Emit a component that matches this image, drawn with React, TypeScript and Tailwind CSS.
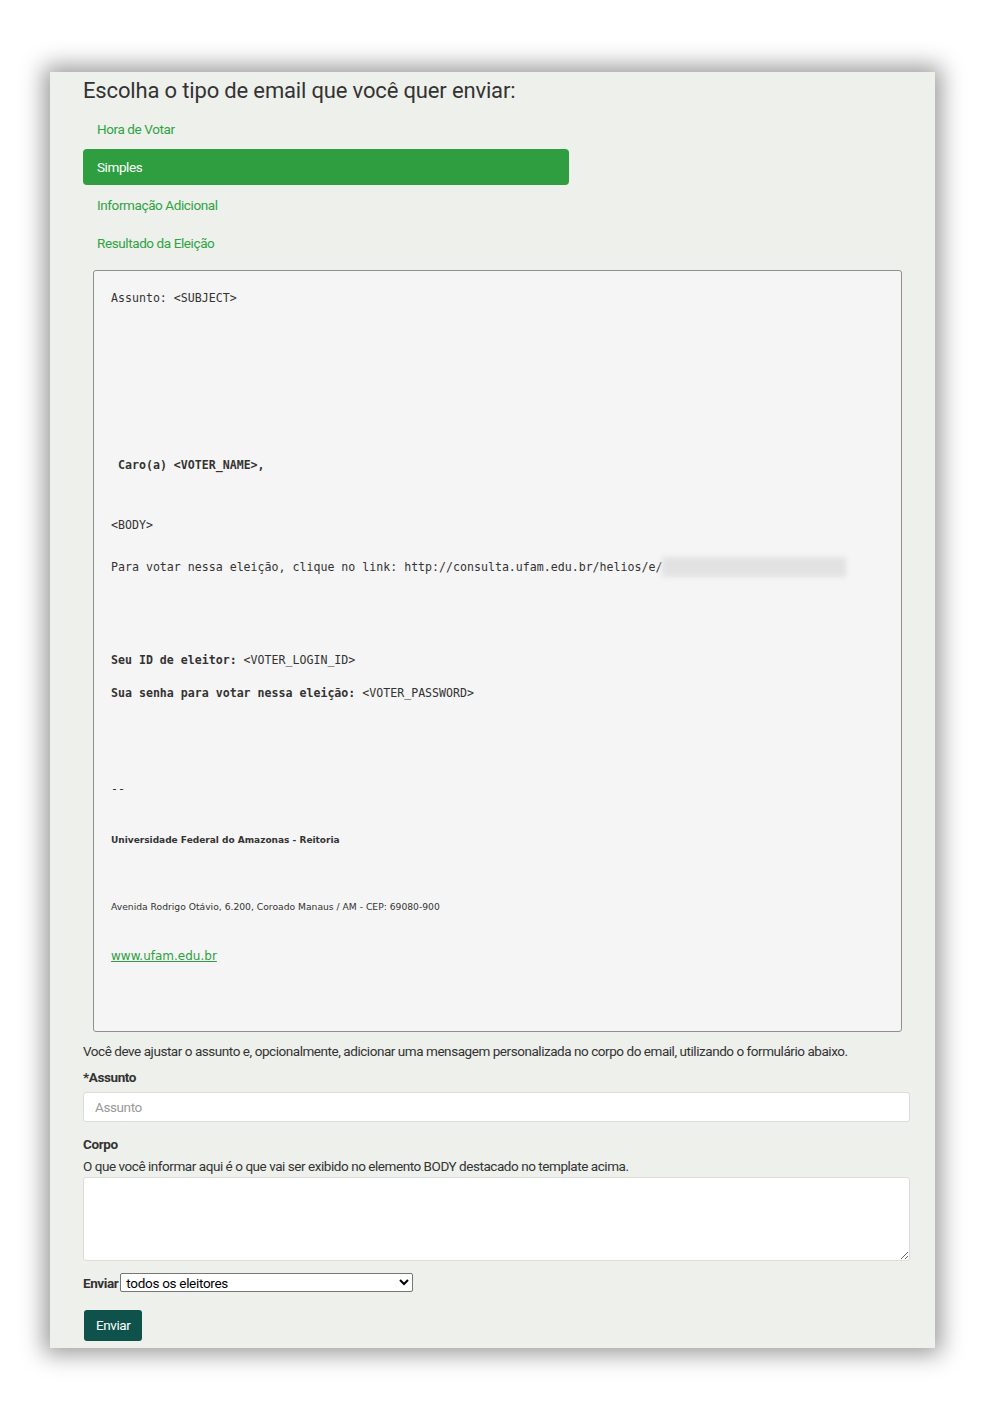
import React from "react";

const tipos = ["Hora de Votar", "Simples", "Informação Adicional", "Resultado da Eleição"];

export default function App() {
  return (
    <div className="min-h-[1420px] bg-white pt-[72px] pl-[50px] font-['Roboto',sans-serif] text-[#333]">
      <div className="w-[885px] h-[1276px] bg-[#eef0ec] shadow-[0_0_22px_6px_rgba(0,0,0,0.4)] pl-[33px] pr-[25px] pt-[6px]">
        <h2 className="text-[22px] leading-[26px] tracking-[-0.16px] text-[#333]">Escolha o tipo de email que você quer enviar:</h2>

        <ul className="mt-[7px] w-[486px] flex flex-col gap-[2px]">
          {tipos.map((t) => (
            <li key={t}>
              <a
                href="#"
                className={
                  t === "Simples"
                    ? "block h-[36px] leading-[36px] pl-[14px] rounded-[4px] bg-[#2e9e41] text-white text-[13.5px] tracking-[-0.4px]"
                    : "block h-[36px] leading-[36px] pl-[14px] text-[#2ea344] text-[13.5px] tracking-[-0.4px]"
                }
              >
                {t}
              </a>
            </li>
          ))}
        </ul>

        <div className="mt-[9px] ml-[10px] w-[809px] border border-[#8f8f8f] rounded-[3px] bg-[#f5f5f5] px-[17px] pt-[19px] pb-[67px] font-['DejaVu_Sans_Mono',monospace] text-[11.6px] text-[#333]">
          <div className="h-[16px] leading-[16px]">Assunto: &lt;SUBJECT&gt;</div>
          <div className="mt-[151px] h-[16px] leading-[16px] font-bold pl-[7px]">Caro(a) &lt;VOTER_NAME&gt;,</div>
          <div className="mt-[44px] h-[16px] leading-[16px]">&lt;BODY&gt;</div>
          <div className="mt-[26px] h-[16px] leading-[16px] flex items-center whitespace-pre">
            <span>Para votar nessa eleição, clique no link: http://consulta.ufam.edu.br/helios/e/</span>
            <span className="inline-block w-[184px] h-[20px] bg-[#e2e2e2] blur-[2.5px]"></span>
          </div>
          <div className="mt-[77px] h-[16px] leading-[16px]">
            <b>Seu ID de eleitor:</b> &lt;VOTER_LOGIN_ID&gt;
          </div>
          <div className="mt-[17px] h-[16px] leading-[16px]">
            <b>Sua senha para votar nessa eleição:</b> &lt;VOTER_PASSWORD&gt;
          </div>
          <div className="mt-[80px] h-[16px] leading-[16px]">--</div>
          <div className="mt-[35px] h-[16px] leading-[16px] font-['DejaVu_Sans',sans-serif] text-[9px] font-bold">
            Universidade Federal do Amazonas - Reitoria
          </div>
          <div className="mt-[51px] h-[16px] leading-[16px] font-['DejaVu_Sans',sans-serif] text-[9.2px]">
            Avenida Rodrigo Otávio, 6.200, Coroado Manaus / AM - CEP: 69080-900
          </div>
          <div className="mt-[33px] h-[16px] leading-[16px] font-['DejaVu_Sans',sans-serif] text-[12px]">
            <a href="#" className="text-[#2e9e41] underline">www.ufam.edu.br</a>
          </div>
        </div>

        <p className="mt-[9px] text-[13.5px] leading-[20px] tracking-[-0.45px]">
          Você deve ajustar o assunto e, opcionalmente, adicionar uma mensagem personalizada no corpo do email, utilizando o formulário abaixo.
        </p>
        <label className="block mt-[6px] text-[13.5px] leading-[20px] font-bold tracking-[-0.4px]">*Assunto</label>
        <input
          placeholder="Assunto"
          className="mt-[5px] block w-[827px] h-[30px] px-[11px] bg-white border border-[#dcdcdc] rounded-[3px] text-[13.5px] tracking-[-0.4px] placeholder:text-[#999]"
        />
        <label className="block mt-[12px] text-[13.5px] leading-[20px] font-bold tracking-[-0.4px]">Corpo</label>
        <p className="mt-[2px] text-[13.5px] leading-[20px] tracking-[-0.45px]">
          O que você informar aqui é o que vai ser exibido no elemento BODY destacado no template acima.
        </p>
        <textarea className="mt-[1px] block w-[827px] h-[84px] bg-white border border-[#dcdcdc] rounded-[3px]"></textarea>

        <div className="mt-[12px] h-[19px] flex items-center gap-[2px]">
          <span className="text-[13.5px] leading-[18px] font-bold tracking-[-0.4px]">Enviar</span>
          <select className="w-[293px] h-[19px] bg-white border border-[#767676] rounded-[2px] text-[13.5px] leading-[16px] tracking-[-0.3px] pl-[1px] text-black">
            <option>todos os eleitores</option>
          </select>
        </div>

        <button className="mt-[18px] h-[31px] px-[12px] ml-[1px] rounded-[3px] bg-[#0e524b] text-white text-[13.5px] tracking-[-0.4px]">
          Enviar
        </button>
      </div>
    </div>
  );
}
